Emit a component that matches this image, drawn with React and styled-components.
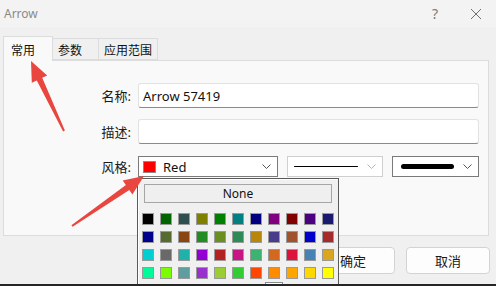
import React from 'react';
import styled, { createGlobalStyle } from 'styled-components';

const GlobalStyle = createGlobalStyle`
    html, body {
        margin: 0;
        padding: 0;
        background: #f0f0f0;
    }
    body {
        font-family: "Noto Sans", "Noto Sans CJK SC", sans-serif;
    }
`;

const PALETTE = [
    ['#000000', '#006400', '#2F4F4F', '#808000', '#008000', '#008080', '#000080', '#800080', '#800000', '#4B0082', '#191970'],
    ['#00008B', '#556B2F', '#8B4513', '#228B22', '#6B8E23', '#2E8B57', '#B8860B', '#483D8B', '#A0522D', '#0000CD', '#A52A2A'],
    ['#00CED1', '#696969', '#20B2AA', '#9400D3', '#B22222', '#C71585', '#3CB371', '#D2691E', '#DC143C', '#4682B4', '#DAA520'],
    ['#00FA9A', '#7CFC00', '#5F9EA0', '#9932CC', '#9ACD32', '#32CD32', '#FF4500', '#FF8C00', '#FFA500', '#FFD700', '#FFFF00'],
    ['#7FFF00', '#00FF00', '#00FF7F', '#00FFFF', '#00BFFF', '#0000FF', '#FF00FF', '#FF0000', '#808080', '#708090', '#CD853F'],
];

// tapered annotation arrow, tail -> tip
const arrowPoints = (x1, y1, x2, y2) => {
    const dx = x2 - x1;
    const dy = y2 - y1;
    const len = Math.hypot(dx, dy);
    const ux = dx / len;
    const uy = dy / len;
    const nx = -uy;
    const ny = ux;
    const headLen = 20;
    const headW = 8.5;
    const bx = x2 - ux * headLen;
    const by = y2 - uy * headLen;
    const pts = [
        [x1 + nx * 1, y1 + ny * 1],
        [bx + nx * 3, by + ny * 3],
        [bx + nx * headW, by + ny * headW],
        [x2, y2],
        [bx - nx * headW, by - ny * headW],
        [bx - nx * 3, by - ny * 3],
        [x1 - nx * 1, y1 - ny * 1],
    ];
    return pts.map(p => p.map(v => v.toFixed(1)).join(',')).join(' ');
};

const Chevron = ({ color = '#555' }) => (
    <svg width="9" height="5" viewBox="0 0 9 5">
        <path d="M0.5 0.5 L4.5 4.5 L8.5 0.5" fill="none" stroke={color} strokeWidth="1" />
    </svg>
);

const App = () => {
    return (
        <Window>
            <GlobalStyle />
            <TitleBar>
                <Title>Arrow</Title>
                <TitleActions>
                    <HelpMark>?</HelpMark>
                    <svg width="12" height="12" viewBox="0 0 12 12">
                        <path d="M1 1 L11 11 M11 1 L1 11" stroke="#6f6f6f" strokeWidth="1" />
                    </svg>
                </TitleActions>
            </TitleBar>
            <Body>
                <TabRow>
                    <Tab active>常用</Tab>
                    <Tab>参数</Tab>
                    <Tab>应用范围</Tab>
                </TabRow>
                <Panel>
                    <Form>
                        <Label>名称:</Label>
                        <TextInput>Arrow 57419</TextInput>
                        <Label>描述:</Label>
                        <TextInput />
                        <Label>风格:</Label>
                        <StyleRow>
                            <Combo width={140}>
                                <ColorChip />
                                <ComboText>Red</ComboText>
                                <Chevron />
                            </Combo>
                            <Combo width={96} disabled>
                                <LineSample thickness={1} />
                                <Chevron color="#b5b5b5" />
                            </Combo>
                            <Combo width={87}>
                                <LineSample thickness={5} />
                                <Chevron />
                            </Combo>
                        </StyleRow>
                    </Form>
                </Panel>
                <ButtonRow>
                    <DialogButton>确定</DialogButton>
                    <DialogButton>取消</DialogButton>
                </ButtonRow>
            </Body>

            <ColorPopup>
                <NoneButton>None</NoneButton>
                <SwatchGrid>
                    {PALETTE.flat().map((c, i) => (
                        <Swatch key={i} color={c} selected={c === '#FF0000'} />
                    ))}
                </SwatchGrid>
            </ColorPopup>

            <Annotations width="496" height="286" viewBox="0 0 496 286">
                <polygon points={arrowPoints(64, 131, 31, 61)} fill="#e8463f" />
                <polygon points={arrowPoints(72, 226, 144, 176)} fill="#e8463f" />
            </Annotations>
        </Window>
    );
};

const Window = styled.div`
    position: relative;
    width: 496px;
    height: 286px;
    box-sizing: border-box;
    background: #f0f0f0;
    border-bottom: 2px solid #262626;
    overflow: hidden;
    display: flex;
    flex-direction: column;
`;

const TitleBar = styled.div`
    height: 27px;
    flex-shrink: 0;
    background: #f3f3f3;
    display: flex;
    align-items: center;
    justify-content: space-between;
    padding: 0 14px 0 4px;
`;

const Title = styled.span`
    font-size: 12px;
    color: #8a8a8a;
`;

const TitleActions = styled.div`
    display: flex;
    align-items: center;
    gap: 32px;
`;

const HelpMark = styled.span`
    font-size: 14px;
    color: #7a7a7a;
`;

const Body = styled.div`
    padding: 9px 7px 0 3px;
    display: flex;
    flex-direction: column;
`;

const TabRow = styled.div`
    display: flex;
    align-items: flex-end;
    height: 24px;
`;

const Tab = styled.div`
    box-sizing: border-box;
    height: ${(p) => (p.active ? '25px' : '22px')};
    margin-bottom: ${(p) => (p.active ? '-1px' : '0')};
    padding: ${(p) => (p.active ? '2px 7px 0' : '2px 5px 0')};
    min-width: ${(p) => (p.active ? '50px' : '46px')};
    background: ${(p) => (p.active ? '#f9f9f9' : '#f0f0f0')};
    border: 1px solid #dcdcdc;
    border-bottom: ${(p) => (p.active ? 'none' : '1px solid #dcdcdc')};
    border-left: ${(p) => (p.active ? '1px solid #dcdcdc' : 'none')};
    font-size: 12px;
    color: #111;
    position: relative;
    z-index: ${(p) => (p.active ? 1 : 0)};
    display: flex;
    align-items: ${(p) => (p.active ? 'flex-start' : 'center')};
    padding-top: ${(p) => (p.active ? '4px' : '1px')};
`;

const Panel = styled.div`
    box-sizing: border-box;
    height: 176px;
    background: #f9f9f9;
    border: 1px solid #dcdcdc;
    padding: 22px 10px 0 86px;
`;

const Form = styled.div`
    display: grid;
    grid-template-columns: 41px 1fr;
    column-gap: 7px;
    row-gap: 11px;
    align-items: center;
`;

const Label = styled.div`
    font-size: 13px;
    color: #1a1a1a;
    text-align: right;
`;

const TextInput = styled.div`
    box-sizing: border-box;
    height: 25px;
    background: #fff;
    border: 1px solid #e2e2e2;
    border-bottom: 1px solid #8a8a8a;
    border-radius: 3px;
    padding: 0 4px;
    font-size: 13px;
    color: #111;
    display: flex;
    align-items: center;
`;

const StyleRow = styled.div`
    display: flex;
    gap: 9px;
    margin-top: 1px;
`;

const Combo = styled.div`
    box-sizing: border-box;
    width: ${(p) => p.width}px;
    height: 21px;
    background: #fff;
    border: 1px solid ${(p) => (p.disabled ? '#cfcfcf' : '#7a7a7a')};
    display: flex;
    align-items: center;
    gap: 7px;
    padding: 0 6px 0 4px;
`;

const ColorChip = styled.span`
    width: 13px;
    height: 12px;
    background: #ff0000;
    border: 1px solid #8a8a8a;
    box-sizing: border-box;
    flex-shrink: 0;
`;

const ComboText = styled.span`
    flex: 1;
    font-size: 13px;
    color: #111;
`;

const LineSample = styled.span`
    flex: 1;
    height: ${(p) => p.thickness}px;
    border-radius: ${(p) => p.thickness}px;
    background: #000;
    margin: 0 2px 0 ${(p) => (p.thickness > 1 ? '4px' : '2px')};
`;

const ButtonRow = styled.div`
    display: flex;
    justify-content: flex-end;
    gap: 11px;
    margin-top: 11px;
    margin-right: -1px;
`;

const DialogButton = styled.div`
    box-sizing: border-box;
    width: 84px;
    height: 27px;
    background: #fdfdfd;
    border: 1px solid #d3d3d3;
    border-radius: 4px;
    font-size: 13px;
    color: #1a1a1a;
    display: flex;
    align-items: center;
    justify-content: center;
`;

const ColorPopup = styled.div`
    position: absolute;
    left: 137px;
    top: 178px;
    width: 202px;
    height: 130px;
    box-sizing: border-box;
    background: #f0f0f0;
    border: 1px solid #5a5a5a;
    box-shadow: inset 1px 1px 0 #ffffff;
    padding: 5px 6px 0 4px;
    z-index: 5;
`;

const NoneButton = styled.div`
    box-sizing: border-box;
    height: 19px;
    margin: 0 0 0 2px;
    width: 188px;
    background: #efefef;
    border: 1px solid #a6a6a6;
    font-size: 12px;
    color: #111;
    display: flex;
    align-items: center;
    justify-content: center;
`;

const SwatchGrid = styled.div`
    display: grid;
    grid-template-columns: repeat(11, 12px);
    gap: 6px;
    margin-top: 10px;
`;

const Swatch = styled.span`
    box-sizing: border-box;
    width: 12px;
    height: 12px;
    background: ${(p) => p.color};
    border: 1px solid #9a9a9a;
    box-shadow: ${(p) => (p.selected ? '0 0 0 2px #ffffff, 0 0 0 3px #8a8a8a' : 'none')};
`;

const Annotations = styled.svg`
    position: absolute;
    left: 0;
    top: 0;
    pointer-events: none;
    z-index: 10;
`;

export default App;
